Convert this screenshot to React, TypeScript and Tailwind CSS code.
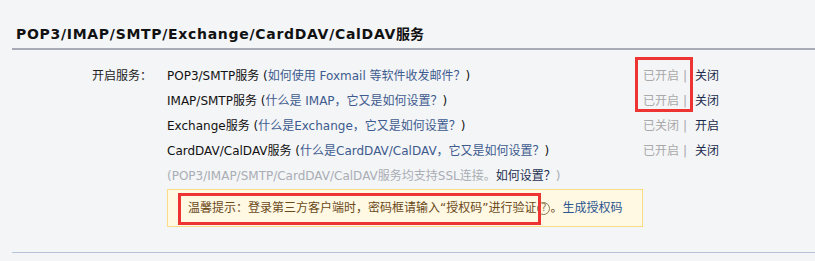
import React from 'react';

const FONT = "font-['DejaVu_Sans','Noto_Sans_CJK_SC',sans-serif]";

interface Service {
  name: string;
  help: string;
  state: string;
  action: string;
}

const SERVICES: Service[] = [
  { name: 'POP3/SMTP服务', help: '如何使用 Foxmail 等软件收发邮件？', state: '已开启', action: '关闭' },
  { name: 'IMAP/SMTP服务', help: '什么是 IMAP，它又是如何设置？', state: '已开启', action: '关闭' },
  { name: 'Exchange服务', help: '什么是Exchange，它又是如何设置？', state: '已关闭', action: '开启' },
  { name: 'CardDAV/CalDAV服务', help: '什么是CardDAV/CalDAV，它又是如何设置？', state: '已开启', action: '关闭' },
];

const ServiceRow: React.FC<{ s: Service; first?: boolean }> = ({ s, first }) => (
  <div className="flex h-[25px] items-center">
    <div className="w-[152px] text-right text-[#222]">{first ? '开启服务：' : ''}</div>
    <div className="ml-[15px] w-[476px] whitespace-nowrap text-[#111]">
      {s.name} (<span className="text-[#3d5b8e]">{s.help}</span>)
    </div>
    <div className="whitespace-nowrap">
      <span className="text-[#a9a9a9]">{s.state}</span>
      <span className="ml-[4px] text-[#a9a9a9]">|</span>
      <span className="ml-[8px] text-[#1c2b4c]">{s.action}</span>
    </div>
  </div>
);

export default function App() {
  return (
    <div className={`relative h-[261px] w-[815px] overflow-hidden bg-[#f4f5f7] text-[12px] ${FONT}`}>
      <div className="ml-[12px] box-border h-[50px] border-b-2 border-[#a6abb5] pl-[4px] pt-[24px]">
        <h2 className="text-[14px] font-bold leading-[20px] tracking-[0.7px] text-[#111]">
          POP3/IMAP/SMTP/Exchange/CardDAV/CalDAV<span className="tracking-normal">服务</span>
        </h2>
      </div>

      <div className="pt-[14px] leading-[25px]">
        {SERVICES.map((s, i) => (
          <ServiceRow key={s.name} s={s} first={i === 0} />
        ))}
        <div className="ml-[167px] h-[25px] whitespace-nowrap text-[#a9adb4]">
          (POP3/IMAP/SMTP/CardDAV/CalDAV服务均支持SSL连接。<span className="text-[#1e3050]">如何设置？</span>)
        </div>

        <div className="ml-[167px] box-border flex h-[38px] w-[476px] items-center border border-[#f8dc8a] bg-[#fff8e3] pl-[20px] leading-[20px]">
          <span className="whitespace-nowrap text-[#6a4a1a]">温馨提示：登录第三方客户端时，密码框请输入“授权码”进行验证</span>
          <span className="ml-[1px] flex h-[13px] w-[13px] items-center justify-center rounded-full border border-[#8a7a5a] text-[10px] leading-none text-[#8a7a5a]">
            ?
          </span>
          <span className="text-[#6a4a1a]">。</span>
          <span className="whitespace-nowrap text-[#2c5590]">生成授权码</span>
        </div>
      </div>

      <div className="ml-[12px] mt-[25px] h-px bg-[#b6c3da]" />

      {/* red annotation boxes */}
      <div className="pointer-events-none absolute left-[635px] top-[57px] h-[55px] w-[58px] border-[3px] border-[#ee3333]" />
      <div className="pointer-events-none absolute left-[178px] top-[193px] h-[32px] w-[363px] border-[3px] border-[#ee3333]" />
    </div>
  );
}
